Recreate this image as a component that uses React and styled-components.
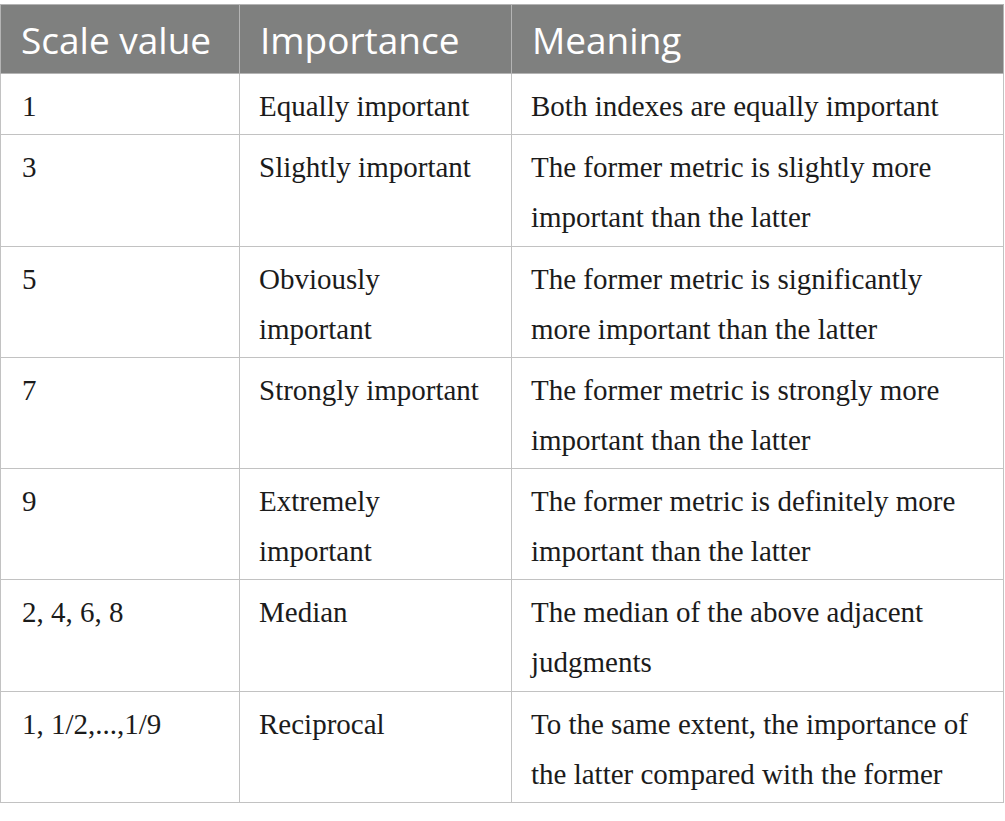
import styled, { createGlobalStyle } from 'styled-components';

const GlobalStyle = createGlobalStyle`
  html, body {
    margin: 0;
    padding: 0;
    background-color: #fff;
  }
`;

const Page = styled.div`
  padding: 4px 2px 0 0;
`;

const Table = styled.table`
  width: 1003px;
  border-collapse: collapse;
  table-layout: fixed;
`;

const HeadCell = styled.th`
  background-color: #7f807f;
  color: #fff;
  font-family: 'Open Sans', 'Noto Sans', sans-serif;
  font-weight: 400;
  font-size: 37px;
  text-align: left;
  height: 69px;
  padding: 0 20px;
  border: 1px solid #b4b4b4;
  box-sizing: border-box;
`;

const Cell = styled.td`
  font-family: 'Liberation Serif', 'DejaVu Serif', serif;
  font-size: 29px;
  line-height: 50px;
  color: #1b1b1b;
  vertical-align: top;
  padding: 7px 18px 3.3px ${(p) => (p.$first ? '21px' : '19px')};
  border: 1px solid #c2c2c2;
`;

const columns = [
  { title: 'Scale value', width: 239 },
  { title: 'Importance', width: 272 },
  { title: 'Meaning', width: 492 },
];

const rows = [
  ['1', 'Equally important', 'Both indexes are equally important'],
  ['3', 'Slightly important', 'The former metric is slightly more important than the latter'],
  ['5', 'Obviously important', 'The former metric is significantly more important than the latter'],
  ['7', 'Strongly important', 'The former metric is strongly more important than the latter'],
  ['9', 'Extremely important', 'The former metric is definitely more important than the latter'],
  ['2, 4, 6, 8', 'Median', 'The median of the above adjacent judgments'],
  ['1, 1/2,...,1/9', 'Reciprocal', 'To the same extent, the importance of the latter compared with the former'],
];

export default function App() {
  return (
    <>
      <GlobalStyle />
      <Page>
        <Table>
          <colgroup>
            {columns.map((c) => (
              <col key={c.title} style={{ width: c.width }} />
            ))}
          </colgroup>
          <thead>
            <tr>
              {columns.map((c) => (
                <HeadCell key={c.title}>{c.title}</HeadCell>
              ))}
            </tr>
          </thead>
          <tbody>
            {rows.map((r) => (
              <tr key={r[0]}>
                {r.map((text, i) => (
                  <Cell key={i} $first={i === 0}>
                    {text}
                  </Cell>
                ))}
              </tr>
            ))}
          </tbody>
        </Table>
      </Page>
    </>
  );
}
